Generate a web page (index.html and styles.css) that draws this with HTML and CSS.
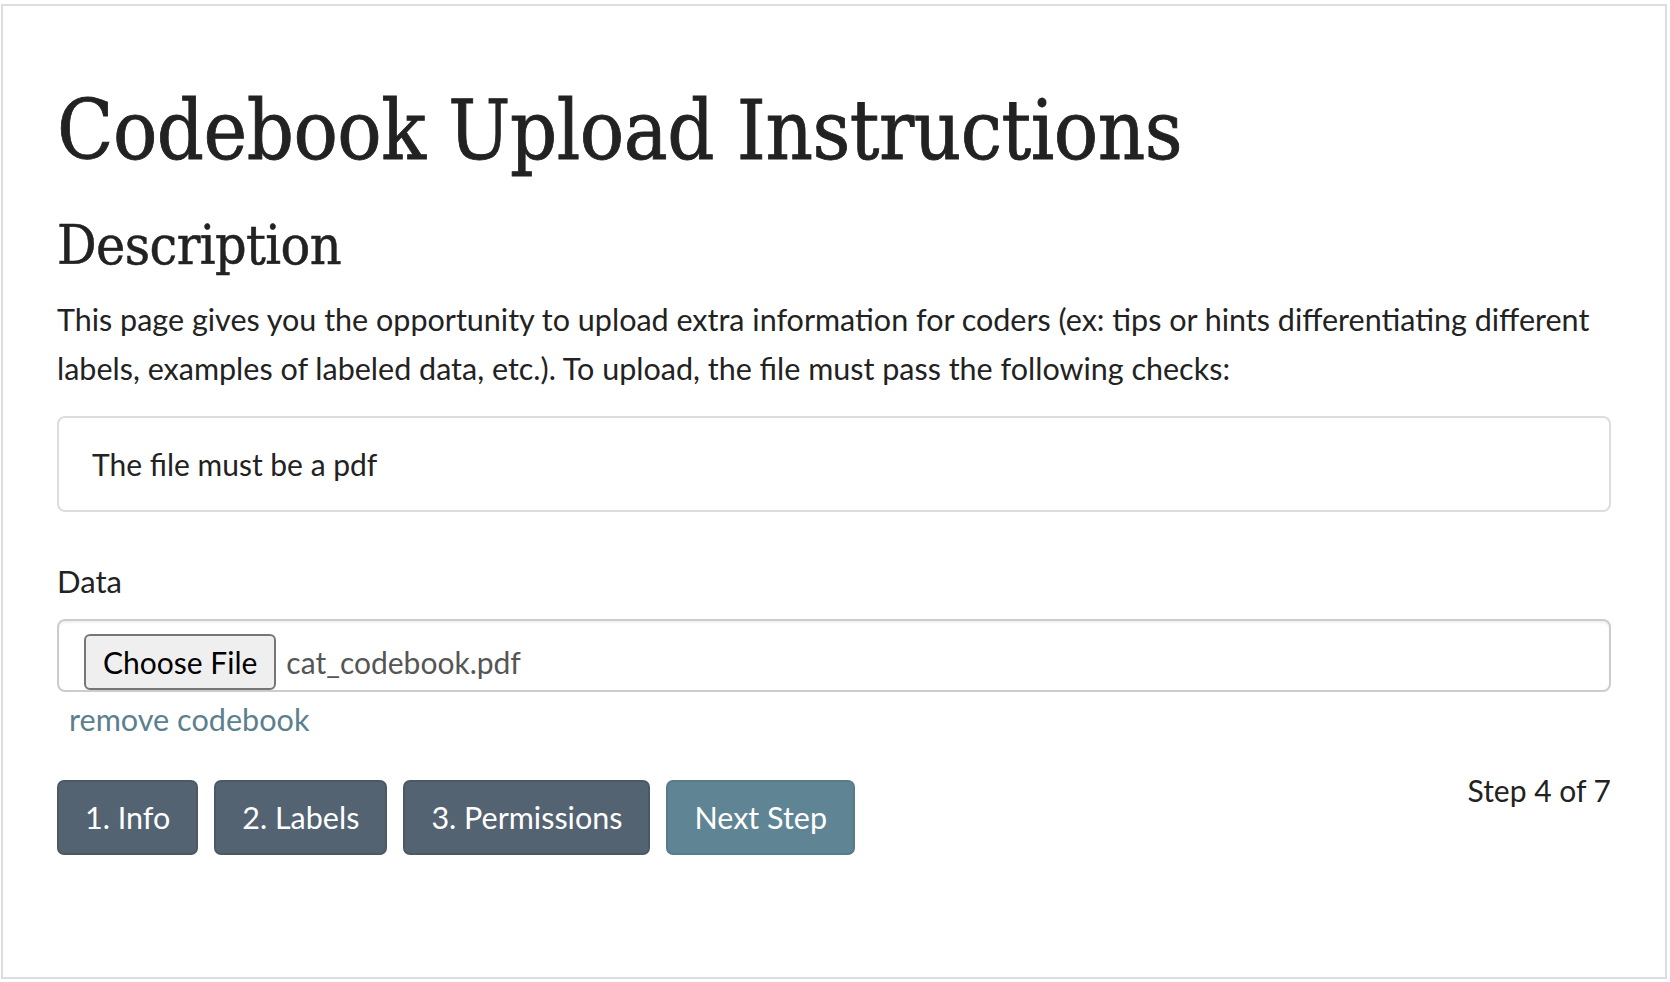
FILE: index.html
```html
<!DOCTYPE html>
<html lang="en">
<head>
<meta charset="utf-8">
<title>Codebook Upload Instructions</title>
<link rel="stylesheet" href="styles.css">
</head>
<body>
<div class="page">
  <h1 class="title">Codebook Upload Instructions</h1>
  <h2 class="subtitle">Description</h2>
  <p class="desc">This page gives you the opportunity to upload extra information for coders (ex: tips or hints differentiating different labels, examples of labeled data, etc.). To upload, the file must pass the following checks:</p>
  <div class="checks">The file must be a pdf</div>
  <div class="label">Data</div>
  <div class="file-field">
    <button class="file-btn" type="button">Choose File</button>
    <span class="file-name">cat_codebook.pdf</span>
  </div>
  <a class="remove" href="#">remove codebook</a>
  <div class="nav-row">
    <div class="nav-buttons">
      <button class="btn btn-dark" type="button">1. Info</button>
      <button class="btn btn-dark" type="button">2. Labels</button>
      <button class="btn btn-dark" type="button">3. Permissions</button>
      <button class="btn btn-next" type="button">Next Step</button>
    </div>
    <div class="step">Step 4 of 7</div>
  </div>
</div>
</body>
</html>
```

FILE: styles.css
```css
html, body {
  margin: 0;
  padding: 0;
  background: #ffffff;
}

body {
  font-family: Lato, "Noto Sans", sans-serif;
  color: #222222;
}

.page {
  margin: 4px 3px 0 1px;
  height: 975px;
  box-sizing: border-box;
  border: 2px solid #dddddd;
  padding: 0 54px;
}

.title {
  font-family: "DejaVu Serif Condensed", "DejaVu Serif", serif;
  font-stretch: condensed;
  font-weight: normal;
  font-size: 82px;
  line-height: 88px;
  letter-spacing: -0.5px;
  -webkit-text-stroke: 0.8px #222222;
  margin: 81px 0 0 0;
  color: #222222;
}

.subtitle {
  font-family: "DejaVu Serif Condensed", "DejaVu Serif", serif;
  font-stretch: condensed;
  font-weight: normal;
  font-size: 55px;
  line-height: 60px;
  letter-spacing: -0.6px;
  -webkit-text-stroke: 0.5px #222222;
  margin: 40px 0 0 0;
  color: #222222;
}

.desc {
  font-size: 30.5px;
  line-height: 49px;
  margin: 20px 0 0 0;
}

.checks {
  margin-top: 23px;
  border: 2px solid #dddddd;
  border-radius: 8px;
  padding: 23px 33px;
  font-size: 30px;
  line-height: 46px;
}

.label {
  margin-top: 49px;
  font-size: 31px;
  line-height: 40px;
}

.file-field {
  margin-top: 18px;
  height: 73px;
  box-sizing: border-box;
  border: 2px solid #cccccc;
  border-radius: 8px;
  box-shadow: inset 0 2px 2px rgba(0, 0, 0, 0.06);
  padding: 13px 0 0 25px;
  display: flex;
  align-items: flex-start;
}

.file-btn {
  height: 56px;
  box-sizing: border-box;
  padding: 0 17px;
  border: 2px solid #767676;
  border-radius: 6px;
  background: #efefef;
  color: #000000;
  font-family: Lato, "Noto Sans", sans-serif;
  font-size: 30px;
  line-height: 52px;
}

.file-name {
  margin-left: 10px;
  font-size: 30px;
  line-height: 56px;
  color: #555555;
}

.remove {
  display: block;
  margin: 8px 0 0 12px;
  font-size: 30.6px;
  line-height: 40px;
  color: #5b7f8e;
  text-decoration: none;
}

.nav-row {
  margin-top: 40px;
  display: flex;
  justify-content: space-between;
  align-items: flex-start;
}

.nav-buttons {
  display: flex;
  gap: 16px;
}

.btn {
  height: 75px;
  box-sizing: border-box;
  padding: 0 26px;
  border-radius: 7px;
  font-family: Lato, "Noto Sans", sans-serif;
  font-size: 30.5px;
  line-height: 71px;
  color: #ffffff;
}

.btn-dark {
  background: #546371;
  border: 2px solid #4b5966;
}

.btn-next {
  background: #5f8494;
  border: 2px solid #587b8a;
}

.step {
  font-size: 30px;
  line-height: 30px;
  margin-top: -5px;
}
```
